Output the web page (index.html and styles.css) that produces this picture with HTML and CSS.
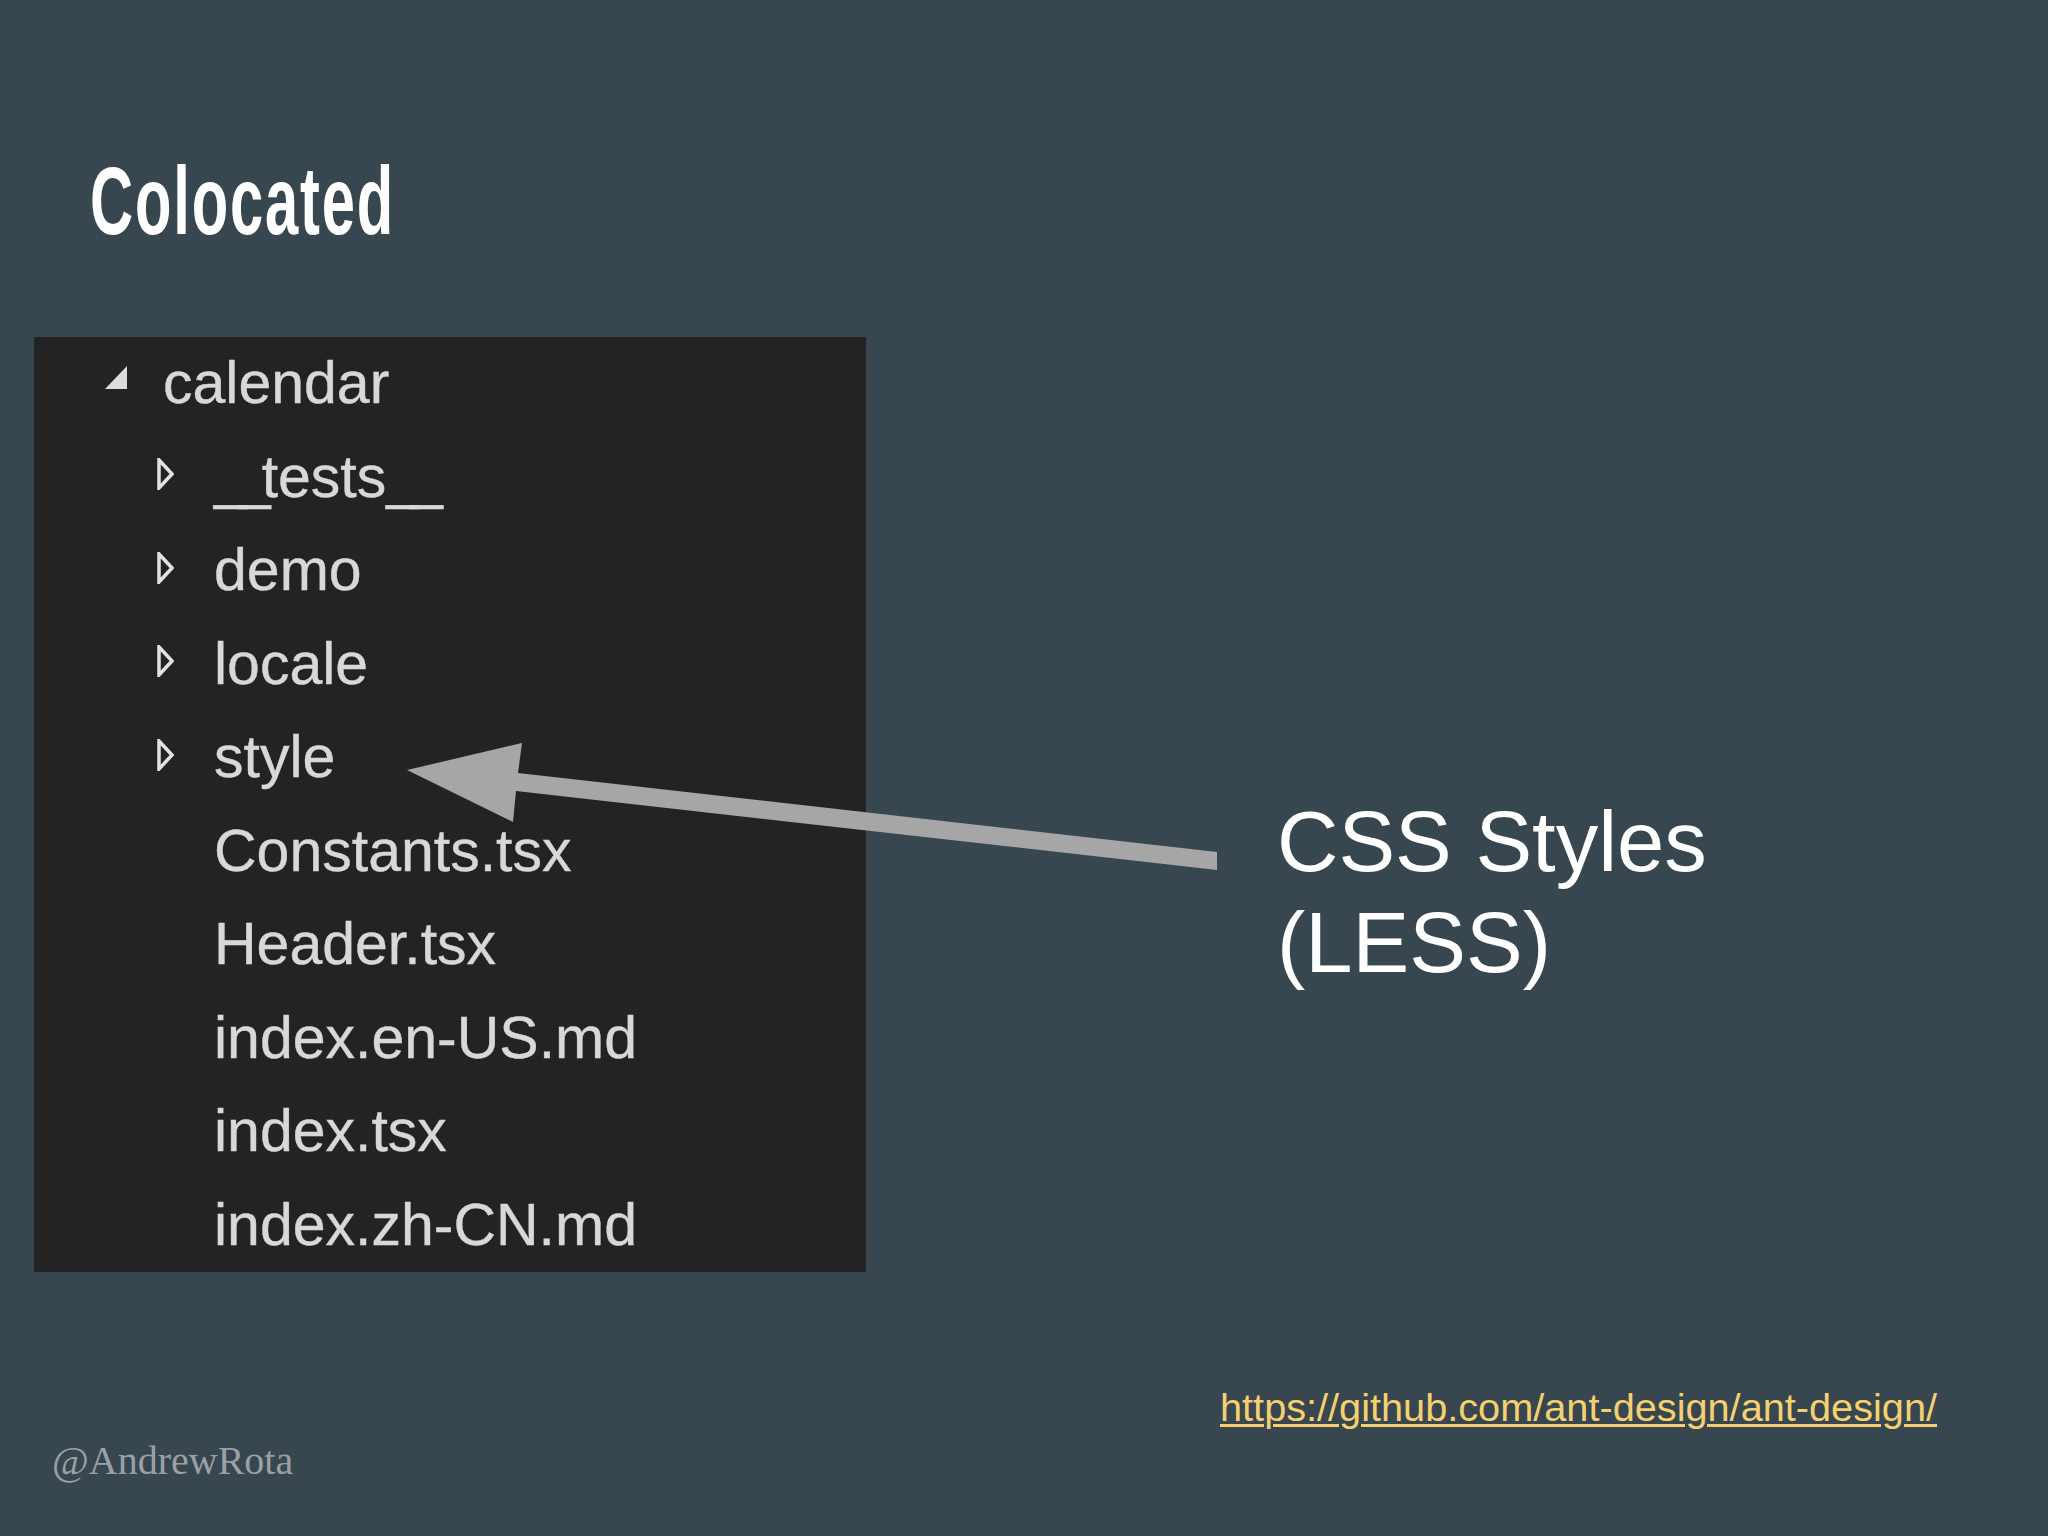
FILE: index.html
```html
<!DOCTYPE html>
<html>
<head>
<meta charset="utf-8">
<link rel="stylesheet" href="styles.css">
</head>
<body>
<div class="slide">
  <h1 class="title"><span class="title-text">Colocated</span></h1>
  <div class="content">
    <div class="tree">
      <div class="row root"><span class="twisty open"><svg width="22" height="23" viewBox="0 0 22 23"><polygon points="0,23 22,23 22,0" fill="#dcdcdc"/></svg></span><span class="name">calendar</span></div>
      <div class="row child"><span class="twisty closed"><svg width="17" height="32" viewBox="0 0 17 32"><polygon points="2,2 15,16 2,30" fill="none" stroke="#e2e2e2" stroke-width="3.5"/></svg></span><span class="name"><span class="us">__</span>tests<span class="us">__</span></span></div>
      <div class="row child"><span class="twisty closed"><svg width="17" height="32" viewBox="0 0 17 32"><polygon points="2,2 15,16 2,30" fill="none" stroke="#e2e2e2" stroke-width="3.5"/></svg></span><span class="name">demo</span></div>
      <div class="row child"><span class="twisty closed"><svg width="17" height="32" viewBox="0 0 17 32"><polygon points="2,2 15,16 2,30" fill="none" stroke="#e2e2e2" stroke-width="3.5"/></svg></span><span class="name">locale</span></div>
      <div class="row child"><span class="twisty closed"><svg width="17" height="32" viewBox="0 0 17 32"><polygon points="2,2 15,16 2,30" fill="none" stroke="#e2e2e2" stroke-width="3.5"/></svg></span><span class="name">style</span></div>
      <div class="row child"><span class="twisty none"></span><span class="name">Constants.tsx</span></div>
      <div class="row child"><span class="twisty none"></span><span class="name">Header.tsx</span></div>
      <div class="row child"><span class="twisty none"></span><span class="name">index.en-US.md</span></div>
      <div class="row child"><span class="twisty none"></span><span class="name">index.tsx</span></div>
      <div class="row child"><span class="twisty none"></span><span class="name">index.zh-CN.md</span></div>
    </div>
    <div class="label">CSS Styles<br>(LESS)</div>
  </div>
  <div class="link-line"><a class="link" href="#">https://github.com/ant-design/ant-design/</a></div>
  <div class="author">@AndrewRota</div>
  <svg class="arrow" width="2048" height="1536" viewBox="0 0 2048 1536">
    <polygon points="407,770 522,743 518,773 1217,852 1217,870 516,791 513,822" fill="#a6a6a6"/>
  </svg>
</div>
</body>
</html>
```
FILE: styles.css
```css
html, body {
  margin: 0;
  padding: 0;
  background: #37464f;
}

.slide {
  position: relative;
  width: 2048px;
  height: 1536px;
  overflow: hidden;
  background: #37464f;
  padding-top: 153px;
  box-sizing: border-box;
}

.title {
  margin: 0;
  padding-left: 90px;
  height: 184px;
  font-family: "Liberation Sans", Arial, sans-serif;
  font-weight: 700;
  font-size: 97px;
  line-height: 96px;
  letter-spacing: 3px;
  color: #ffffff;
}

.title-text {
  display: inline-block;
  transform: scaleX(0.615);
  transform-origin: left center;
}

.content {
  display: flex;
  align-items: flex-start;
}

.tree {
  margin-left: 34px;
  width: 832px;
  height: 935px;
  background: #232323;
  font-family: "Liberation Sans", Arial, sans-serif;
  font-size: 59px;
  color: #d8d8d8;
  -webkit-text-stroke: 0.4px #d8d8d8;
}

.row {
  display: flex;
  align-items: center;
  height: 93.5px;
  line-height: 93.5px;
  white-space: nowrap;
}

.row.root {
  padding-left: 71px;
}

.row.child {
  padding-left: 123px;
}

.us {
  letter-spacing: -9px;
}

.twisty {
  display: flex;
  align-items: center;
  justify-content: center;
}

.twisty.open {
  width: 22px;
  height: 23px;
  margin-right: 36px;
  margin-bottom: 13px;
}

.twisty.closed {
  width: 17px;
  height: 32px;
  margin-right: 40px;
  margin-bottom: 6px;
}

.twisty.none {
  width: 17px;
  margin-right: 40px;
}

.twisty svg {
  display: block;
}

.label {
  margin-left: 411px;
  margin-top: 454px;
  font-family: "Liberation Sans", Arial, sans-serif;
  font-size: 85px;
  line-height: 101px;
  color: #ffffff;
}

.link-line {
  margin-left: 1220px;
  margin-top: 111px;
  height: 48px;
  font-family: "Liberation Sans", Arial, sans-serif;
  font-size: 39.7px;
  line-height: 48px;
}

.link {
  color: #f4d06f;
  text-decoration: underline;
  text-decoration-thickness: 3px;
  text-underline-offset: 3px;
}

.author {
  margin-left: 52px;
  margin-top: 6px;
  font-family: "Liberation Serif", "DejaVu Serif", serif;
  font-size: 40px;
  line-height: 48px;
  color: #9aa0a5;
}

.arrow {
  position: absolute;
  left: 0;
  top: 0;
  pointer-events: none;
}
```
